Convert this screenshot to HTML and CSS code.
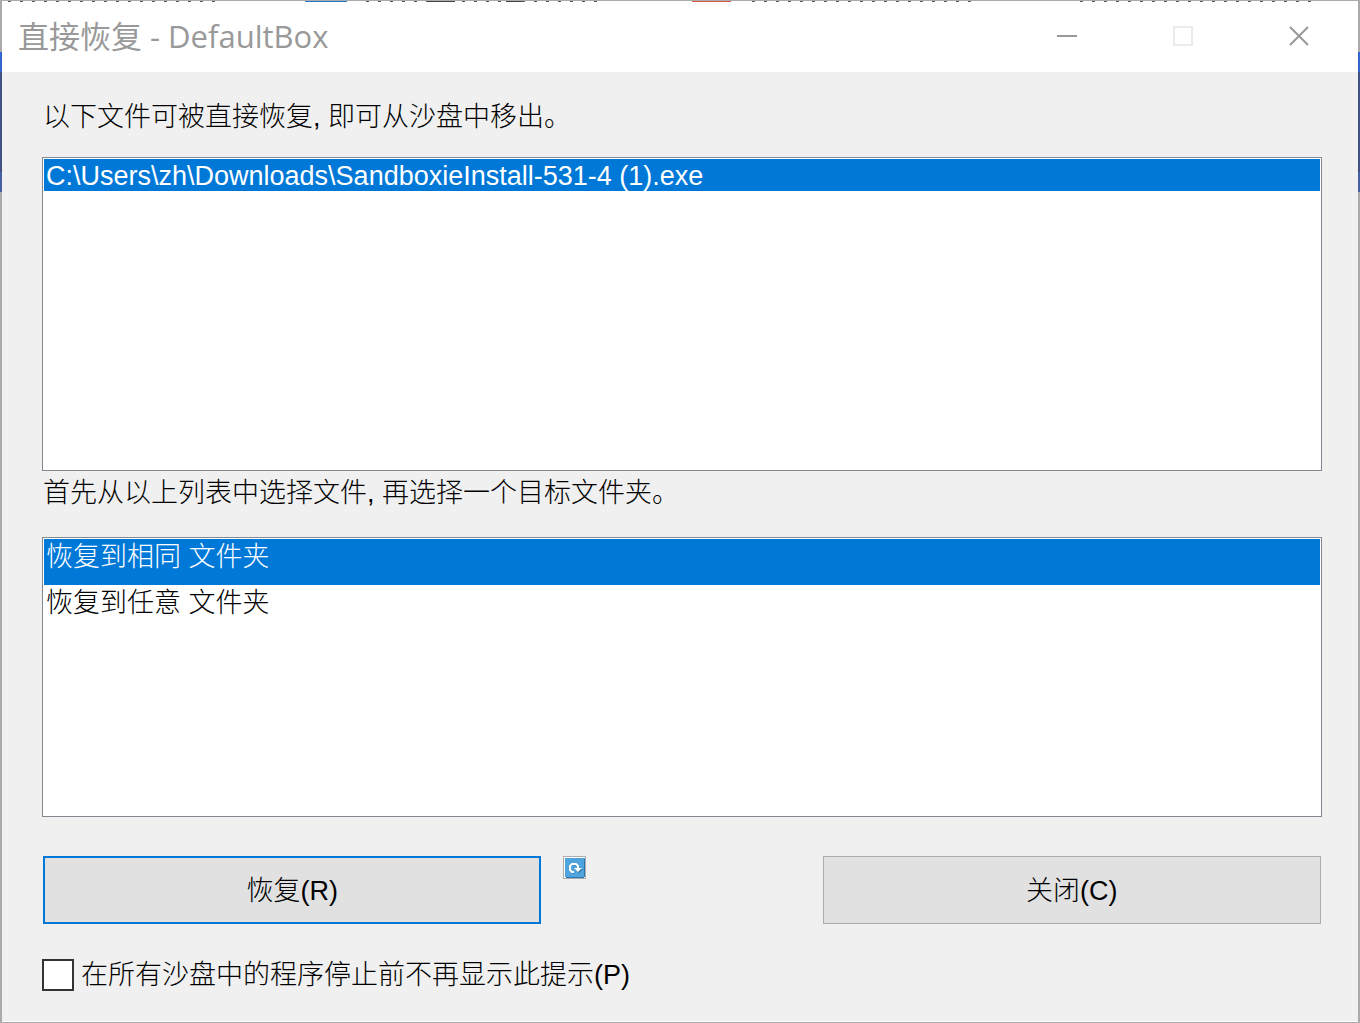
FILE: index.html
```html
<!DOCTYPE html>
<html lang="zh-CN">

<head>
    <meta charset="UTF-8">
    <meta name="viewport" content="width=device-width, initial-scale=1.0">
    <title>直接恢复 - DefaultBox</title>
    <link rel="stylesheet" href="styles.css">
</head>

<body>
    <div class="window">
        <header class="titlebar">
            <h1>直接恢复 - DefaultBox</h1>
            <div class="window-buttons">
                <button type="button" aria-label="最小化">
                    <svg width="20" height="20" viewBox="0 0 20 20"><path d="M0 10H20" stroke="#999" stroke-width="2"/></svg>
                </button>
                <button type="button" aria-label="最大化" disabled>
                    <svg width="20" height="20" viewBox="0 0 20 20"><path d="M1 1H19V19H1Z" fill="none" stroke="#ebebeb" stroke-width="2"/></svg>
                </button>
                <button type="button" aria-label="关闭窗口">
                    <svg width="20" height="20" viewBox="0 0 20 20"><path d="M1 1L19 19M19 1L1 19" stroke="#999" stroke-width="2"/></svg>
                </button>
            </div>
        </header>

        <form class="content">
            <label class="hint" for="files">以下文件可被直接恢复, 即可从沙盘中移出。</label>
            <select id="files" class="list file-list" size="8">
                <option selected>C:\Users\zh\Downloads\SandboxieInstall-531-4 (1).exe</option>
            </select>

            <label class="hint hint-target" for="folders">首先从以上列表中选择文件, 再选择一个目标文件夹。</label>
            <select id="folders" class="list folder-list" size="6">
                <option selected>恢复到相同 文件夹</option>
                <option>恢复到任意 文件夹</option>
            </select>

            <div class="actions">
                <button type="button" class="btn btn-default">恢复(R)</button>
                <button type="button" class="refresh" aria-label="刷新">
                    <svg width="23" height="23" viewBox="0 0 23 23">
                        <path d="M0 0H23V23H0Z" fill="#adadad"/>
                        <path d="M1 1H22V22H1Z" fill="#fff"/>
                        <path d="M2 2H22V21H2Z" fill="#50a3dc"/>
                        <path d="M3 21H21V22H3ZM21 3H22V21H21Z" fill="#2777ae"/>
                        <path d="M11 17H9L7 15V11L9 9H13L16 11V14" fill="none" stroke="#34739d"/>
                        <path d="M12 13H20L16 17Z" fill="#34739d"/>
                        <path d="M11 16H9L7 14V10L9 8H13L15 10V13" fill="none" stroke="#fff" stroke-width="2"/>
                        <path d="M11 12H19L15 16Z" fill="#fff"/>
                    </svg>
                </button>
                <button type="button" class="btn btn-close">关闭(C)</button>
            </div>

            <label class="check" for="hidePrompt">
                <input type="checkbox" id="hidePrompt">
                <span>在所有沙盘中的程序停止前不再显示此提示(P)</span>
            </label>
        </form>
    </div>
</body>

</html>
```

FILE: styles.css
```css
* {
    box-sizing: border-box;
}

html {
    height: 100%;
}

/* the desktop shows as a thin edge round the window */
body {
    margin: 0;
    padding: 1px 2px;
    min-height: 100%;
    display: flex;
    background: linear-gradient(#aaa 52px, #3265d0 52px, #3265d0 72px, #405080 72px, #405080 172px, #4560a0 172px, #4560a0 192px, #aaa 192px);
    font-family: "Liberation Sans", "Noto Sans CJK SC", sans-serif;
    font-size: 27px;
    color: #000;
}

.window {
    flex: 1;
    display: flex;
    flex-direction: column;
    background-color: #f0f0f0;
    border-bottom: 1px solid #fff;
}

.titlebar {
    height: 71px;
    display: flex;
    align-items: center;
    justify-content: space-between;
    padding: 0 1px 2px 16px;
    background-color: #fff;
    /* tops of the letters of the page behind */
    background-image:
        linear-gradient(90deg, transparent 303px, #2878cc 303px, #2878cc 345px, transparent 345px, transparent 426px, #444 426px, #444 453px, transparent 453px, transparent 504px, #444 504px, #444 520px, transparent 520px, transparent 690px, #e05840 690px, #e05840 729px, transparent 729px),
        repeating-linear-gradient(90deg, #555 0, #555 3px, transparent 3px, transparent 12px),
        repeating-linear-gradient(90deg, #555 0, #555 3px, transparent 3px, transparent 12px),
        repeating-linear-gradient(90deg, #555 0, #555 3px, transparent 3px, transparent 12px),
        repeating-linear-gradient(90deg, #555 0, #555 3px, transparent 3px, transparent 12px);
    background-size: 100% 1px, 208px 1px, 240px 1px, 222px 1px, 240px 1px;
    background-position: 0 0, 6px 0, 364px 0, 750px 0, 1078px 0;
    background-repeat: no-repeat;
}

h1 {
    margin: 0;
    font-family: "Open Sans", "Noto Sans CJK SC", sans-serif;
    font-size: 31px;
    font-weight: 400;
    line-height: 40px;
    color: #999;
}

.window-buttons {
    display: flex;
    align-self: stretch;
}

.window-buttons button {
    width: 116px;
    padding: 0;
    display: flex;
    align-items: center;
    justify-content: center;
    border: none;
    background: none;
}

.content {
    flex: 1;
    display: flex;
    flex-direction: column;
    padding: 29px 36px 24px 40px;
    font-weight: 300;
}

.hint {
    padding-left: 1px;
    line-height: 32px;
    margin-bottom: 24px;
}

.hint-target {
    margin-top: 6px;
    margin-bottom: 28px;
}

.list {
    width: 100%;
    padding: 1px;
    border: 1px solid #828790;
    border-radius: 0;
    outline: none;
    background-color: #fff;
    font: inherit;
    color: #000;
    overflow: hidden;
}

.list option {
    display: flex;
    align-items: center;
    font-weight: 300;
}

.list option:checked {
    background: #0078d7 linear-gradient(#0078d7, #0078d7);
    color: #fff;
    -webkit-text-fill-color: #fff;
}

.file-list {
    height: 314px;
}

.file-list option {
    height: 31px;
    padding: 2px 2px 0;
}

.folder-list {
    height: 280px;
}

.folder-list option {
    height: 46px;
    padding: 0 2px 15px;
}

.actions {
    display: flex;
    align-items: flex-start;
    padding: 0 1px;
    margin: 39px 0 35px;
}

.btn {
    width: 39%;
    height: 68px;
    padding: 0 0 3px;
    border: 1px solid #adadad;
    background-color: #e1e1e1;
    font: inherit;
    color: #000;
}

.btn-default {
    border: 2px solid #0078d7;
}

.btn-close {
    margin-left: auto;
}

.refresh {
    margin-left: 22px;
    padding: 0;
    border: none;
    background: none;
}

.refresh svg {
    display: block;
}

.check {
    display: flex;
    align-items: center;
    align-self: flex-start;
    gap: 7px;
    line-height: 32px;
}

.check input {
    appearance: none;
    width: 32px;
    height: 32px;
    margin: 0;
    border: 2px solid #333;
    background-color: #fff;
}

.check input:checked {
    background-color: #0078d7;
}
```
